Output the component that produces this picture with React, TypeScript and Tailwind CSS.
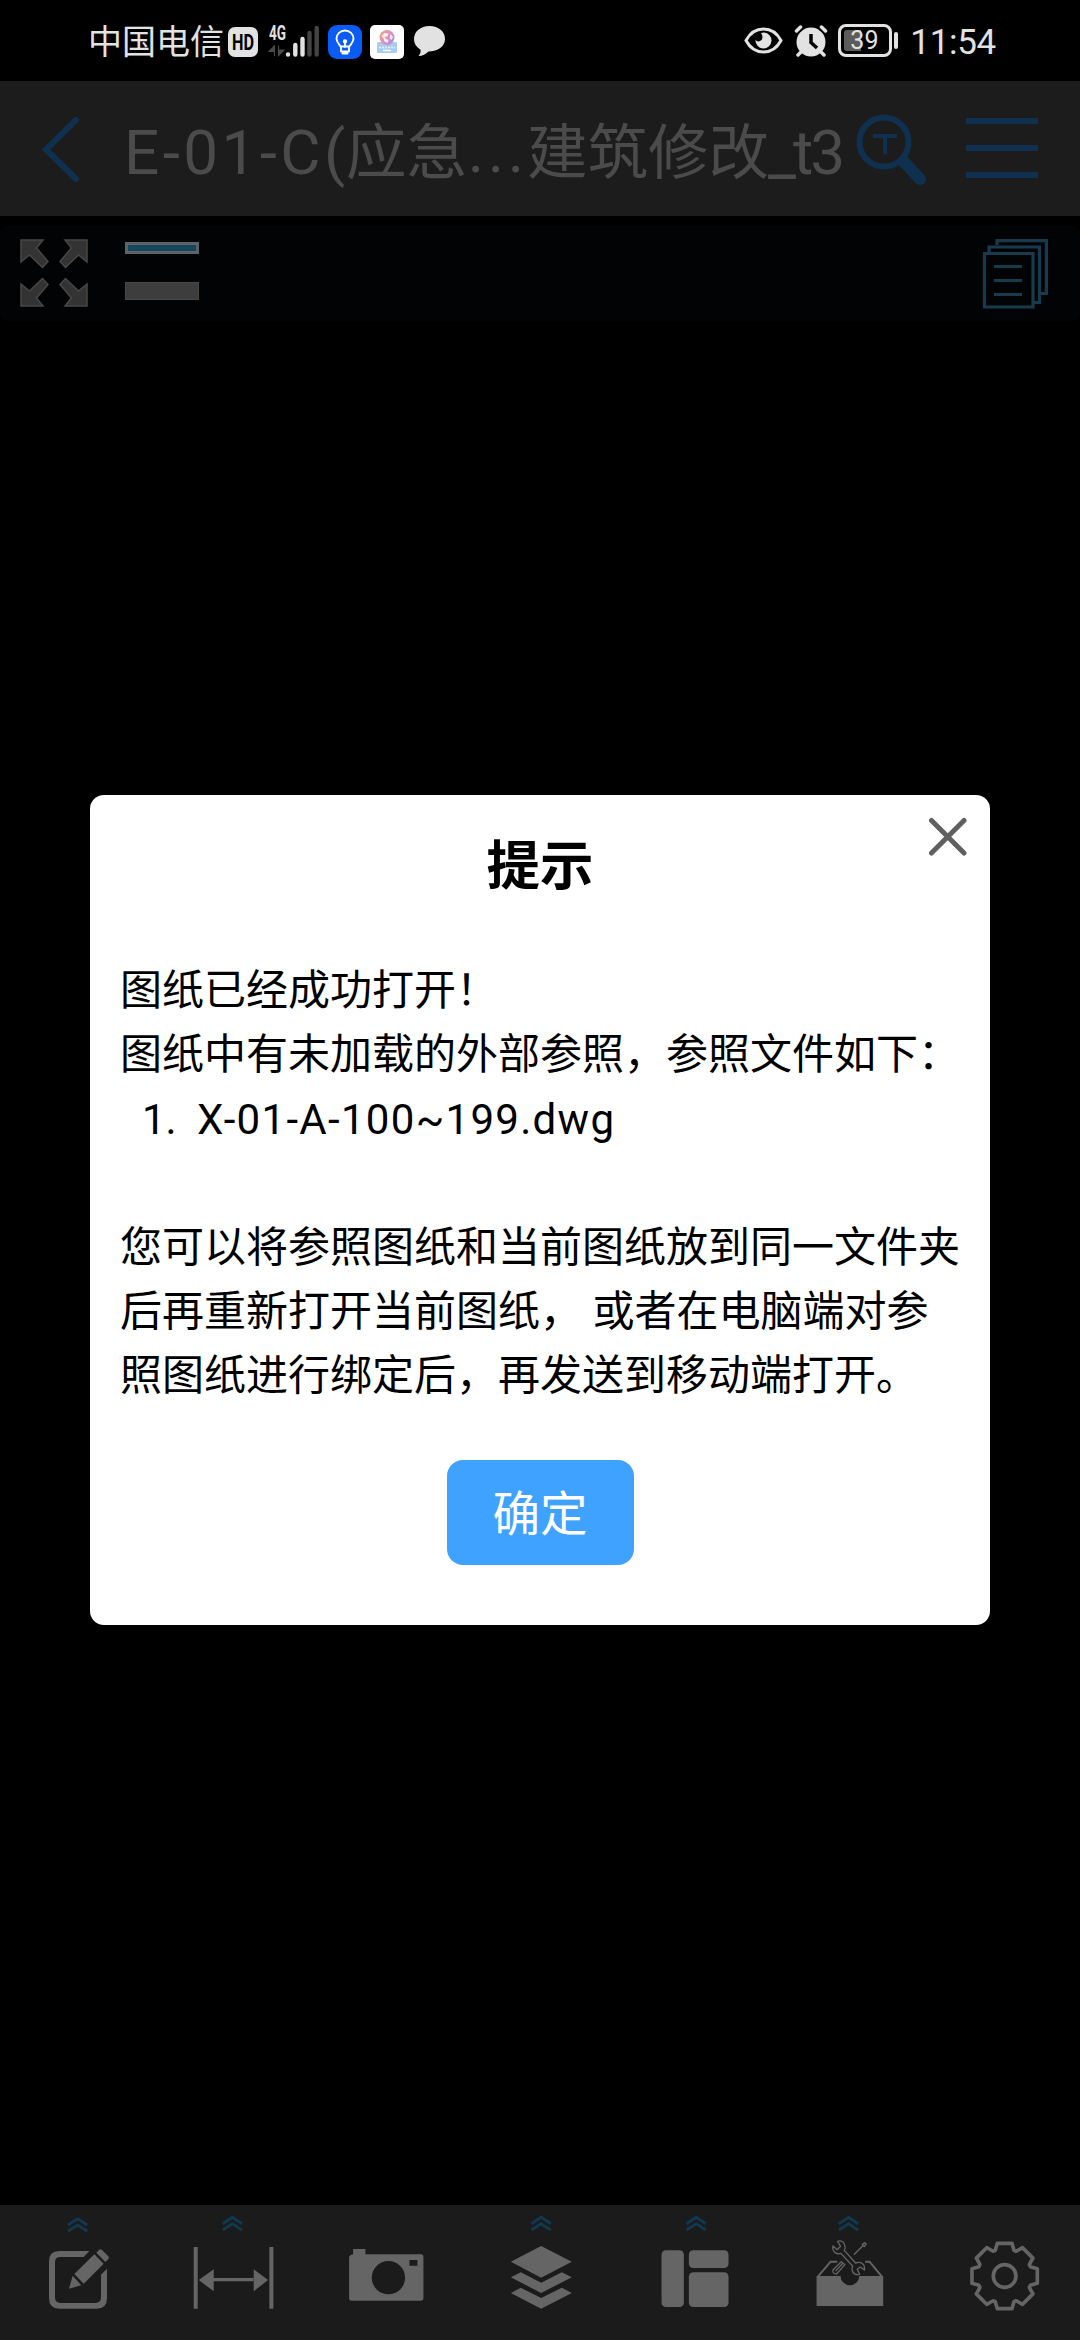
import { ReactNode } from "react";

function StatusBar() {
  return (
    <div className="h-[81px] flex items-center justify-between pl-[88px] pr-[84px] text-[#e2e2e2]">
      <div className="flex items-center h-full pt-[2px]">
        <span className="w-[140px] text-[34px] leading-[44px] whitespace-nowrap">中国电信</span>
        <svg width="30" height="30" viewBox="0 0 30 30">
          <rect width="30" height="30" rx="7" fill="#e2e2e2" />
          <text x="4" y="23" fontSize="22" fontWeight="700" textLength="22" lengthAdjust="spacingAndGlyphs">
            HD
          </text>
        </svg>
        {/* signal strength */}
        <svg width="50" height="34" viewBox="0 0 50 34" className="ml-[11px] overflow-visible">
          <text x="0" y="15" fill="#e2e2e2" fontSize="19.500" fontWeight="700" textLength="17" lengthAdjust="spacingAndGlyphs">
            4G
          </text>
          <path d="M5.500 31V21L0 26.500H5.500M9.500 20.500V30.500L15 25H9.500" fill="#4a4a4a" stroke="#4a4a4a" strokeWidth="1.200" />
          <g strokeWidth="4.400" strokeLinecap="round" stroke="#e2e2e2">
            <path d="M19 29.500v0.010M26.300 20v9.500M33.500 14v15.500" />
            <path d="M40.500 8v21.500M47.700 3v26.500" stroke="#444" />
          </g>
        </svg>
        <svg width="34" height="34" viewBox="0 0 34 34" className="ml-[9px]">
          <rect width="34" height="34" rx="9" fill="#0a5cf5" />
          <g fill="none" stroke="#fff" strokeWidth="1.900" strokeLinecap="round" strokeLinejoin="round">
            <path d="M12.500 21.500C11.500 19 8.500 17.500 8.500 13.500a8.500 8 0 0 1 17 0c0 4-3 5.500-4 8zM13 21.500v5h8v-5M14.500 28.500h5M17 18v4" />
            <circle cx="17" cy="16.500" r="1.200" fill="#fff" />
          </g>
        </svg>
        <svg width="34" height="34" viewBox="0 0 34 34" className="ml-[8px]">
          <defs>
            <linearGradient id="globe" x1="0" y1="0.200" x2="1" y2="0.800">
              <stop offset="0" stopColor="#f0a07c" />
              <stop offset="0.500" stopColor="#e08fc0" />
              <stop offset="1" stopColor="#a98be8" />
            </linearGradient>
          </defs>
          <rect width="34" height="34" rx="5" fill="#fff" />
          <rect x="7" y="17" width="20" height="11" rx="1.500" fill="#a9cdf2" />
          <path d="M9 22.500h16" stroke="#e6f2fd" strokeWidth="1.300" strokeDasharray="2 1" />
          <path d="M13 25.500h8" stroke="#fff" strokeWidth="1.500" />
          <circle cx="17" cy="12.500" r="7.500" fill="url(#globe)" />
          <path d="M11.500 11l3-3 4 .5-1 3-3 .5 1.500 2 2.500 1-1 3-3-1.500-1-3zM20.500 9l2.500 3-1.500 3-2-2z" fill="#fdeef2" />
        </svg>
        <svg width="33" height="31" viewBox="0 0 33 31" className="ml-[9px]">
          <path d="M16.500 0C7.500 0 1 5.500 1 13c0 5 3 8.500 6.500 10.500.5 2.500-.5 4.500-2 6.500 4 0 7.500-2 10-4.500C25 25.500 32 20.500 32 13S25.500 0 16.500 0z" fill="#e2e2e2" />
        </svg>
      </div>
      <div className="flex items-center">
        <svg width="39" height="27" viewBox="0 0 39 27">
          <path d="M2 13.500C6 6 12 2 19.500 2S33 6 37 13.500C33 21 27 25 19.500 25S6 21 2 13.500z" fill="none" stroke="#e2e2e2" strokeWidth="3" />
          <path d="M20 5.500a8 8 0 1 1-8.500 7.500 4 4 0 0 0 7-2.500 7 7 0 0 0-1.500-4.500z" fill="#e2e2e2" />
        </svg>
        <svg width="34" height="32" viewBox="0 0 34 32" className="ml-[11px]">
          <circle cx="17" cy="17" r="14.500" fill="#e2e2e2" />
          <path d="M2 6l5-4M32 6l-5-4" stroke="#000" strokeWidth="7" />
          <path d="M2.500 6l4-4M31.500 6l-4-4M7 27l-3 3M27 27l3 3" stroke="#e2e2e2" strokeWidth="3.500" strokeLinecap="round" />
          <path d="M17 9v8.500l6 5.500" fill="none" stroke="#000" strokeWidth="3.500" />
        </svg>
        <span className="ml-[10px] w-[54px] h-[33px] rounded-[8px] border-[3px] border-[#e2e2e2] p-[3px] flex">
          <span className="w-[17px] rounded-l-[3px] bg-[#5c5c5c] text-[25px] leading-[22px] whitespace-nowrap pl-[6px]">39</span>
        </span>
        <span className="ml-[2px] w-[4px] h-[17px] rounded-full bg-[#e2e2e2]" />
        <span className="ml-[12px] text-[35px] leading-none tracking-[-0.300px] pt-[3px]">11:54</span>
      </div>
    </div>
  );
}

function Header() {
  return (
    <div className="h-[135px] bg-[#1c1c1c] flex items-start">
      <svg width="124" height="135" viewBox="0 81 124 135">
        <path d="M76 120L46 149.500L76 179" fill="none" stroke="#10304f" strokeWidth="6" strokeLinecap="round" />
      </svg>
      <div className="w-[726px] h-[135px] flex items-center text-[60.500px] leading-none text-[#4b4b4b] whitespace-nowrap pt-[12px]">
        <span className="w-[222px] text-[62px] tracking-[3.400px] pb-[4px]">E-01-C(</span>
        <span className="w-[122px]">应急</span>
        <span className="w-[59px] tracking-[4px] pb-[4px]">...</span>
        <span className="w-[241px]">建筑修改</span>
        <span className="text-[62px] tracking-[-3px] pb-[4px]">_t3</span>
      </div>
      <svg width="230" height="135" viewBox="850 81 230 135" fill="none" stroke="#10304f" strokeWidth="6">
        <circle cx="884" cy="142" r="24.500" />
        <path d="M904 162L920 179" strokeWidth="12" strokeLinecap="round" />
        <path d="M873 136H897M885 136V154" strokeWidth="4" />
        <path d="M966 121H1038M966 148H1038M966 175H1038" />
      </svg>
    </div>
  );
}

function Toolbar() {
  const corners = ["", "translate(68 0) scale(-1 1)", "translate(0 68) scale(1 -1)", "translate(68 68) scale(-1 -1)"];

  return (
    <div className="mt-[9px] h-[96px] rounded-[8px] bg-[#020305] flex items-start pl-[20px] pt-[14px]">
      <svg width="68" height="68" viewBox="0 0 68 68">
        {corners.map((transform) => (
          <path
            key={transform}
            transform={transform}
            d="M1 1H23L16.500 9L28 22.500L22.500 28.500L9.500 16L1 23Z"
            fill="#333"
            stroke="#484848"
            strokeWidth="1.500"
          />
        ))}
      </svg>
      <div className="ml-[37px] mt-[3px] w-[74px]">
        <div className="h-[12px] border-[3px] border-[#5a6468] bg-[#17455c]" />
        <div className="mt-[28px] h-[18px] border border-[#484848] bg-[#3d3d3d]" />
      </div>
      <svg width="66" height="72" viewBox="981 239 66 72" className="ml-auto mr-[32px]" fill="none" stroke="#173b4c" strokeWidth="3.200">
        <path d="M983.500 253.500H1032V307H983.500ZM988 252V247H1038.500V302.500H1033M996 245V240.600H1045.400V293.500H1040" />
        <path d="M993 266.500H1021M993 280.500H1021M993 294.500H1021" />
      </svg>
    </div>
  );
}

type BarItemProps = {
  // left edge of the item's drawing area
  x: number;
  chevron?: [number, number];
  children: ReactNode;
};

function BarItem({ x, chevron, children }: BarItemProps) {
  return (
    <div className="flex-1">
      <svg className="w-full h-[135px]" viewBox={`${x} 45 462.86 405`} fill="#656565">
        {chevron && (
          <path
            transform={`translate(${chevron[0]} ${chevron[1]})`}
            d="M-29 25L0 6L29 25M-29 44L0 25L29 44"
            fill="none"
            stroke="#12384f"
            strokeWidth="9"
          />
        )}
        {children}
      </svg>
    </div>
  );
}

// one gear tooth, repeated eight times around the centre
const tooth = [
  [-28, -77],
  [-22, -98],
  [22, -98],
  [28, -77],
];

const gearPoints = Array.from({ length: 8 }, (_, i) => {
  const a = (i * Math.PI) / 4;
  return tooth
    .map(([x, y]) => `${x * Math.cos(a) - y * Math.sin(a)},${x * Math.sin(a) + y * Math.cos(a)}`)
    .join(" ");
}).join(" ");

function BottomBar() {
  return (
    <div className="mt-auto h-[135px] bg-[#1b1b1b] flex">
      <BarItem x={0} chevron={[233, 80]}>
        <path d="M268 183H178Q147 183 147 214V325Q147 356 178 356H290Q321 356 321 325V236L303 254V322Q303 339 286 339H182Q165 339 165 322V217Q165 201 182 201H251Z" />
        <path d="M207 296L218 257L244 286ZM223 252L283 193L311 221L251 281ZM289 188L297 180Q301 176 306 180L325 199Q328 203 325 207L316 216Z" />
      </BarItem>
      <BarItem x={462.86} chevron={[698, 76]}>
        <path d="M582 171H594V356H582ZM809 171H821V356H809ZM640 264H763V274H640ZM597 270L642 238V304ZM805 270L762 238V304Z" />
      </BarItem>
      <BarItem x={-34.3}>
        <path
          fillRule="evenodd"
          d="M98 177H135V193H301Q309 193 309 201V324Q309 332 301 332H94Q86 332 86 324V203Q86 195 98 193ZM204 213A50 50 0 1 0 204 313A50 50 0 1 0 204 213ZM267 210V227H291V210Z"
        />
      </BarItem>
      <BarItem x={428.6} chevron={[663, 76]}>
        <path d="M572 215L663 168L755 215L663 263ZM572 262L602 247L663 278L725 247L755 262L663 309ZM572 309L602 293L663 324L725 293L755 309L663 356Z" />
      </BarItem>
      <BarItem x={-68.6} chevron={[169, 76]}>
        <rect x="65" y="181" width="67" height="170" rx="13" />
        <rect x="147" y="181" width="119" height="53" rx="13" />
        <rect x="147" y="247" width="119" height="104" rx="13" />
      </BarItem>
      <BarItem x={394.3} chevron={[627, 76]}>
        <path d="M531 258H603A28 28 0 0 0 659 258H731V348H531Z" />
        <path d="M535 260L573 215H593M727 260L690 215H677" fill="none" stroke="#656565" strokeWidth="6" />
        <g fill="none" stroke="#656565" strokeWidth="4" strokeLinejoin="round">
          <path d="M594 154Q609 149 615 164Q619 173 614 181L648 219Q664 214 672 224Q676 231 675 240L662 231L653 238L660 253Q645 257 639 245Q636 236 639 228L604 190Q590 194 583 184Q578 177 580 168L593 179L603 169Z" />
          <path d="M580 240L605 215L616 224L591 252Q584 253 580 246ZM588 243L610 220" />
          <path d="M643 194L670 167M668 163L676 158L680 162L674 170Z" />
        </g>
      </BarItem>
      <BarItem x={857.1}>
        <g transform="translate(1093 258)" fill="none" stroke="#656565" strokeWidth="11" strokeLinejoin="round">
          <polygon points={gearPoints} />
          <circle r="34" />
        </g>
      </BarItem>
    </div>
  );
}

function Dialog() {
  return (
    <div className="absolute inset-0 flex items-start justify-center pt-[795px]">
      <div className="relative w-[900px] h-[830px] rounded-[14px] bg-white text-black flex flex-col items-center">
        <svg className="absolute right-[22px] top-[22px]" width="40" height="40" viewBox="0 0 40 40">
          <path d="M3.500 3.500L36 36M36 3.500L3.500 36" stroke="#606060" strokeWidth="5" strokeLinecap="round" />
        </svg>
        <h1 className="mt-[45px] text-[53.500px] leading-[54px] font-bold">提示</h1>
        <div className="mt-[65px] w-full pl-[30px] text-[42px] leading-[64.300px] whitespace-pre">
          <p>图纸已经成功打开！</p>
          <p>图纸中有未加载的外部参照，参照文件如下：</p>
          <p className="flex pl-[22px]">
            <span className="w-[55px]">1.</span>
            <span className="tracking-[1.300px]">X-01-A-100~199.dwg</span>
          </p>
          <p className="mt-[64px]">您可以将参照图纸和当前图纸放到同一文件夹</p>
          <p>后再重新打开当前图纸， 或者在电脑端对参</p>
          <p>照图纸进行绑定后，再发送到移动端打开。</p>
        </div>
        <button className="mt-[51px] pt-[7px] w-[187px] h-[105px] rounded-[16px] bg-[#3fa2ff] text-white text-[47.500px] leading-none">
          确定
        </button>
      </div>
    </div>
  );
}

function App() {
  return (
    <div className="relative w-[1080px] h-[2340px] overflow-hidden bg-black flex flex-col font-['Roboto','Noto_Sans_CJK_SC',sans-serif]">
      <StatusBar />
      <Header />
      <Toolbar />
      <BottomBar />
      <Dialog />
    </div>
  );
}

export default App;
